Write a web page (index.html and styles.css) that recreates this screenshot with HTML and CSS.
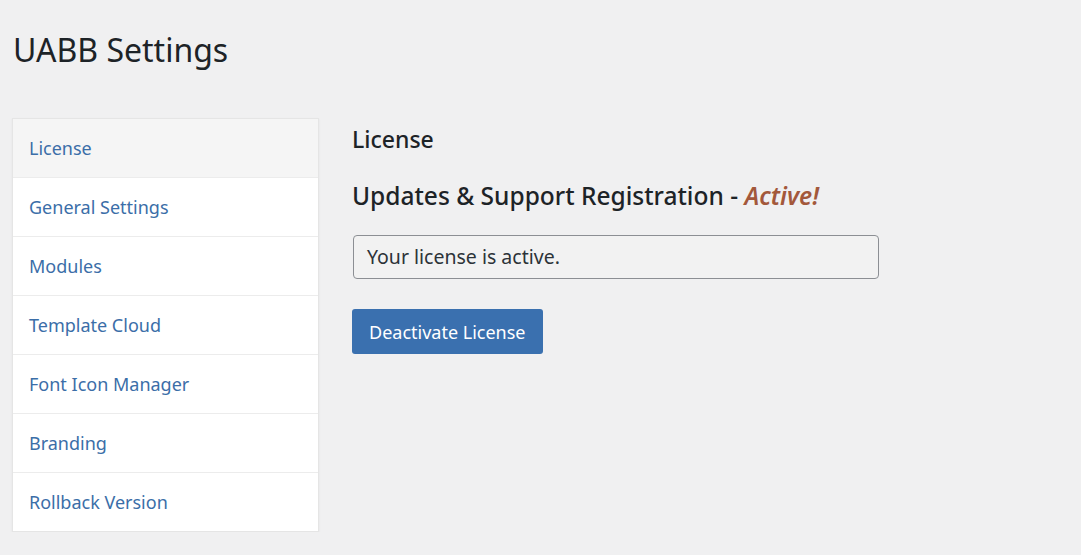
FILE: index.html
```html
<!DOCTYPE html>
<html>
<head>
<meta charset="utf-8">
<link rel="stylesheet" href="styles.css">
</head>
<body>
<div class="wrap">
  <h1 class="title">UABB Settings</h1>
  <div class="layout">
    <nav class="sidebar">
      <a class="nav-item active">License</a>
      <a class="nav-item">General Settings</a>
      <a class="nav-item">Modules</a>
      <a class="nav-item">Template Cloud</a>
      <a class="nav-item">Font Icon Manager</a>
      <a class="nav-item">Branding</a>
      <a class="nav-item">Rollback Version</a>
    </nav>
    <main class="content">
      <h2 class="section-title">License</h2>
      <h3 class="reg-title">Updates &amp; Support Registration - <i class="active-text">Active!</i></h3>
      <div class="license-box">Your license is active.</div>
      <button class="btn">Deactivate License</button>
    </main>
  </div>
</div>
</body>
</html>
```

FILE: styles.css
```css
html, body {
  margin: 0;
  padding: 0;
  background: #f0f0f1;
  font-family: "Noto Sans", "Open Sans", sans-serif;
  color: #1d2327;
}
.wrap {
  padding: 0 12px;
}
.title {
  margin: 0;
  padding: 28px 0 0 1px;
  font-size: 32px;
  font-weight: 400;
  line-height: 44px;
  color: #1d2327;
}
.layout {
  display: flex;
  align-items: flex-start;
  margin-top: 46px;
  gap: 33px;
}
.sidebar {
  width: 305px;
  background: #fff;
  border: 1px solid #e5e5e5;
  box-shadow: 0 1px 2px rgba(0,0,0,0.06);
  display: flex;
  flex-direction: column;
}
.nav-item {
  display: block;
  height: 58px;
  line-height: 58px;
  padding-left: 16px;
  font-size: 18px;
  color: #3b6ea8;
  border-bottom: 1px solid #ececec;
}
.nav-item:last-child {
  border-bottom: none;
}
.nav-item.active {
  background: #f5f5f5;
}
.content {
  display: flex;
  flex-direction: column;
  align-items: flex-start;
  padding-top: 4px;
}
.section-title {
  margin: 0;
  font-size: 23px;
  font-weight: 500;
  line-height: 34px;
}
.reg-title {
  margin: 23px 0 0;
  font-size: 24.5px;
  font-weight: 500;
  line-height: 34px;
}
.active-text {
  color: #a3583b;
  font-weight: 600;
}
.license-box {
  margin: 22px 0 0 1px;
  width: 498px;
  height: 42px;
  line-height: 42px;
  padding: 0 13px;
  border: 1px solid #8c8f94;
  border-radius: 4px;
  background: #f2f2f2;
  font-size: 19.5px;
  color: #2c3338;
}
.btn {
  margin-top: 30px;
  height: 45px;
  padding: 0 17px;
  border: none;
  border-radius: 3px;
  background: #3a70af;
  color: #fff;
  font-family: inherit;
  font-size: 18px;
  font-weight: 400;
}
```
